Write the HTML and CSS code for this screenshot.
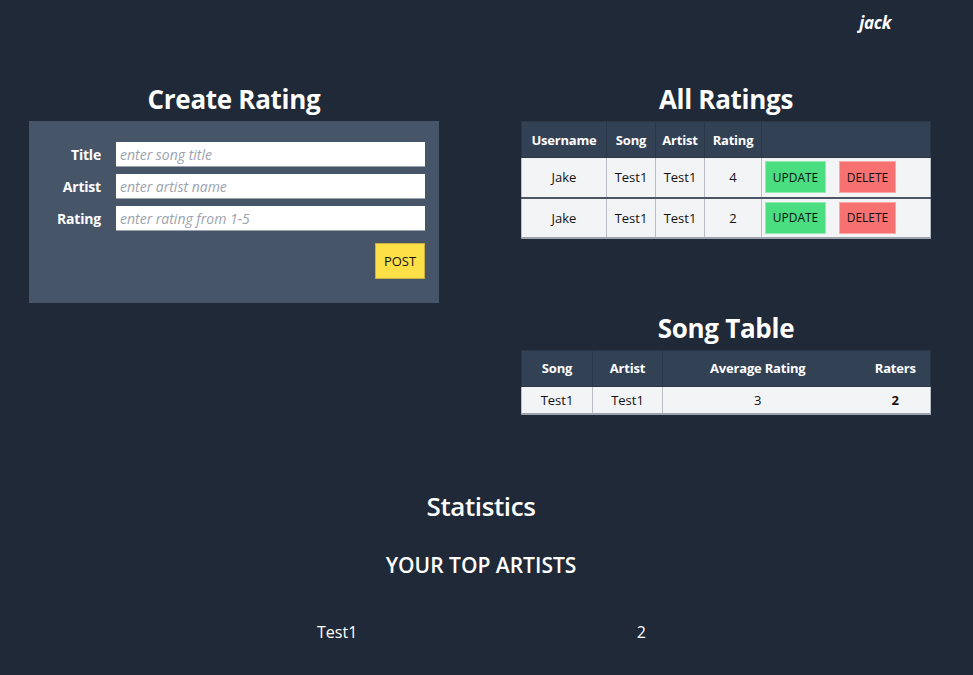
FILE: index.html
```html
<!DOCTYPE html>
<html>
<head>
<meta charset="utf-8">
<link rel="stylesheet" href="styles.css">
</head>
<body>
<header class="topbar"><span class="user">jack</span></header>
<div class="columns">
  <section class="col">
    <h2 class="title">Create Rating</h2>
    <form class="panel">
      <div class="field"><label>Title</label><input type="text" placeholder="enter song title"></div>
      <div class="field"><label>Artist</label><input type="text" placeholder="enter artist name"></div>
      <div class="field"><label>Rating</label><input type="text" placeholder="enter rating from 1-5"></div>
      <div class="actions"><button type="button" class="btn post">POST</button></div>
    </form>
  </section>
  <section class="col">
    <h2 class="title">All Ratings</h2>
    <table class="tbl ratings">
      <thead><tr><th class="c-user">Username</th><th class="c-song">Song</th><th class="c-artist">Artist</th><th class="c-rating">Rating</th><th class="c-act"></th></tr></thead>
      <tbody>
        <tr><td>Jake</td><td>Test1</td><td>Test1</td><td>4</td><td class="acts"><button class="btn upd">UPDATE</button><button class="btn del">DELETE</button></td></tr>
        <tr><td>Jake</td><td>Test1</td><td>Test1</td><td>2</td><td class="acts"><button class="btn upd">UPDATE</button><button class="btn del">DELETE</button></td></tr>
      </tbody>
    </table>
    <h2 class="title second">Song Table</h2>
    <table class="tbl songs">
      <thead><tr><th class="s-song">Song</th><th class="s-artist">Artist</th><th class="s-avg">Average Rating</th><th class="s-raters">Raters</th></tr></thead>
      <tbody>
        <tr><td>Test1</td><td>Test1</td><td class="avg">3</td><td class="raters">2</td></tr>
      </tbody>
    </table>
  </section>
</div>
<section class="stats">
  <h2 class="stats-title">Statistics</h2>
  <h3 class="sub">YOUR TOP ARTISTS</h3>
  <div class="artist-row"><span>Test1</span><span>2</span></div>
</section>
</body>
</html>
```
FILE: styles.css
```css
* { box-sizing: border-box; }
html, body { margin: 0; padding: 0; }
body {
  background: #1f2937;
  color: #fff;
  font-family: "Open Sans", "Noto Sans", sans-serif;
  width: 973px;
  height: 675px;
  overflow: hidden;
}
.topbar {
  display: flex;
  justify-content: flex-end;
  padding: 11px 82px 0 0;
  height: 34px;
}
.user {
  font-style: italic;
  font-weight: 700;
  font-size: 17px;
  letter-spacing: -0.3px;
  line-height: 24px;
}
.columns {
  display: flex;
  gap: 82px;
  padding-left: 29px;
  margin-top: 48px;
}
.col { width: 410px; }
.title {
  margin: 0;
  text-align: center;
  font-size: 26px;
  font-weight: 700;
  line-height: 34px;
  height: 39px;
  letter-spacing: -0.3px;
}
.title.second { margin-top: 72px; height: 39px; }
.panel {
  background: #475569;
  height: 182px;
  padding: 21px 14px 0 0;
}
.field {
  display: flex;
  align-items: center;
  margin-bottom: 7px;
  height: 25px;
}
.field label {
  width: 72px;
  text-align: right;
  font-weight: 700;
  font-size: 14px;
  margin-right: 15px;
  letter-spacing: -0.2px;
}
.field input {
  flex: 1;
  height: 25px;
  border: none;
  border-bottom: 1px solid #9ca3af;
  padding: 0 4px;
  font-family: inherit;
  font-size: 14px;
  font-style: italic;
  outline: none;
}
.field input::placeholder { color: #9ca3af; }
.actions { display: flex; justify-content: flex-end; margin-top: 12px; }
.btn {
  font-family: inherit;
  color: #111;
  border: 1px solid rgba(255,255,255,0.4);
  cursor: pointer;
}
.post {
  background: #fde047;
  border-color: #c9b040;
  width: 50px;
  height: 36px;
  font-size: 13px;
  padding: 0;
}
.tbl {
  width: 410px;
  border-collapse: collapse;
  font-size: 13px;
}
.tbl th {
  background: #334155;
  color: #fff;
  font-weight: 700;
  font-size: 13px;
  height: 36px;
  padding: 0;
  border: 1px solid #2b3646;
  letter-spacing: -0.2px;
}
.tbl td {
  background: #f3f4f6;
  color: #111;
  text-align: center;
  padding: 0;
  border-left: 1px solid #b8bcc4;
  border-right: 1px solid #b8bcc4;
}
.ratings td { height: 40px; }
.ratings tbody tr:first-child td { border-bottom: 2px solid #4b5563; }
.ratings tbody tr:last-child td { border-bottom: 2px solid #9ca3af; }
.c-user { width: 85px; }
.c-song { width: 49px; }
.c-artist { width: 49px; }
.c-rating { width: 57px; }
.tbl td.acts { text-align: left; padding-left: 3px; }
.upd, .del {
  height: 32px;
  font-size: 12px;
  padding: 0;
  vertical-align: middle;
}
.upd { background: #4ade80; width: 61px; margin-right: 13px; }
.del { background: #f87171; width: 57px; }
.songs td { height: 28px; border-bottom: 2px solid #9ca3af; }
.s-song { width: 71px; }
.s-artist { width: 70px; }
.s-avg { width: 190px; }
.songs th.s-avg { border-right: none; }
.songs th.s-raters { border-left: none; text-align: center; padding-left: 8px; }
.songs td.avg { border-right: none; }
.songs td.raters { border-left: none; font-weight: 700; padding-left: 8px; }
.stats { width: 962px; text-align: center; margin-top: 74px; }
.stats-title {
  margin: 0;
  font-size: 26px;
  font-weight: 600;
  line-height: 34px;
  letter-spacing: -0.4px;
}
.sub {
  margin: 28px 0 0;
  font-size: 21px;
  font-weight: 600;
  line-height: 28px;
  letter-spacing: 0;
}
.artist-row {
  display: flex;
  justify-content: space-between;
  width: 330px;
  margin: 42px auto 0;
  font-size: 16px;
  line-height: 22px;
  padding-left: 1px;
}
```
